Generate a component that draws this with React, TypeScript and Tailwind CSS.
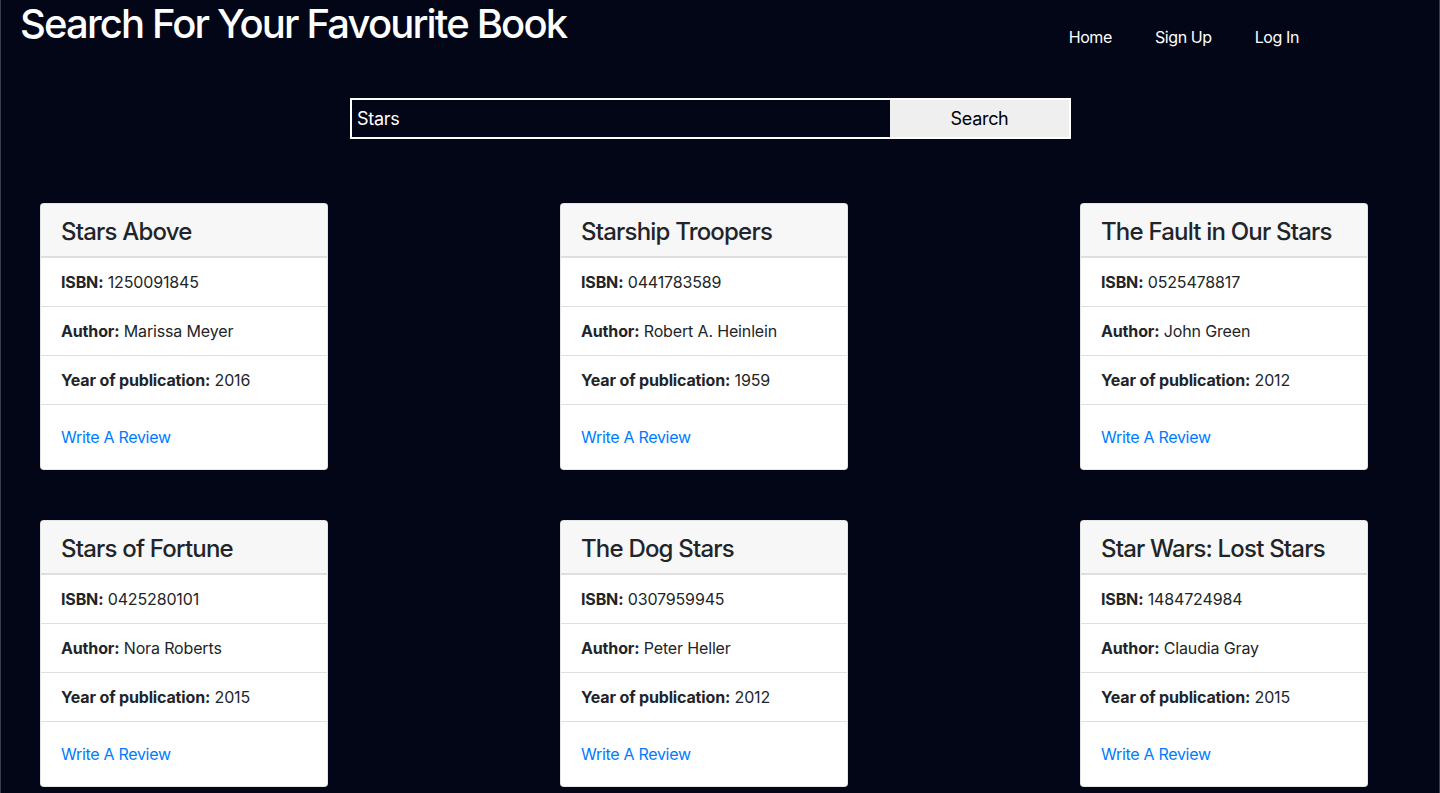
import React from 'react';

interface Book {
  title: string;
  isbn: string;
  author: string;
  year: string;
}

const books: Book[] = [
  { title: 'Stars Above', isbn: '1250091845', author: 'Marissa Meyer', year: '2016' },
  { title: 'Starship Troopers', isbn: '0441783589', author: 'Robert A. Heinlein', year: '1959' },
  { title: 'The Fault in Our Stars', isbn: '0525478817', author: 'John Green', year: '2012' },
  { title: 'Stars of Fortune', isbn: '0425280101', author: 'Nora Roberts', year: '2015' },
  { title: 'The Dog Stars', isbn: '0307959945', author: 'Peter Heller', year: '2012' },
  { title: 'Star Wars: Lost Stars', isbn: '1484724984', author: 'Claudia Gray', year: '2015' },
];

const BookCard: React.FC<{ book: Book }> = ({ book }) => {
  return (
    <div className="w-[288px] bg-white rounded-[4px] overflow-hidden text-[#212529] border border-black/10">
      {/* Header */}
      <div className="bg-[#f7f7f7] px-5 pt-[14px] pb-[10px] border-b-2 border-[#dedede]">
        <h3 className="text-[24px] leading-[28px] font-medium tracking-[-0.8px] whitespace-nowrap">{book.title}</h3>
      </div>
      <ul>
        <li className="px-5 py-3 text-[16px] leading-6 border-b border-[#dfdfdf]">
          <span className="font-bold">ISBN:</span> {book.isbn}
        </li>
        <li className="px-5 py-3 text-[16px] leading-6 border-b border-[#dfdfdf]">
          <span className="font-bold">Author:</span> {book.author}
        </li>
        <li className="px-5 py-3 text-[16px] leading-6 border-b border-[#dfdfdf]">
          <span className="font-bold">Year of publication:</span> {book.year}
        </li>
      </ul>
      <div className="px-5 py-5">
        <a href="#" className="text-[16px] leading-6 text-[#007bff] tracking-[-0.3px]">Write A Review</a>
      </div>
    </div>
  );
};

export default function App() {
  return (
    <div
      className="min-h-screen bg-[#020617] border-x border-b border-[#3a3d48] rounded-b-[6px] overflow-hidden tracking-[-0.15px]"
      style={{ fontFamily: 'Inter, "Liberation Sans", sans-serif' }}
    >
      {/* Top bar */}
      <div className="flex items-start justify-between">
        <h1 className="pl-[19px] text-[40px] leading-[48px] font-medium text-white tracking-[-1.85px]">
          Search For Your Favourite Book
        </h1>
        <nav className="flex items-center gap-[43px] pt-[25px] pr-[140px] text-white text-[16px] leading-6 tracking-[-0.4px]">
          <a href="#">Home</a>
          <a href="#">Sign Up</a>
          <a href="#">Log In</a>
        </nav>
      </div>

      {/* Search form */}
      <form className="mt-[49px] ml-[349px] flex w-[721px] h-[41px] border-2 border-white">
        <input
          type="text"
          defaultValue="Stars"
          className="flex-1 bg-[#020617] text-white text-[18px] px-[5px] outline-none tracking-[-0.3px]"
        />
        <button type="button" className="w-[179px] bg-[#efefef] text-black text-[18px] tracking-[-0.3px]">
          Search
        </button>
      </form>

      {/* Results */}
      <div className="mt-[64px] pl-[39px] grid grid-cols-[repeat(3,288px)] items-start gap-x-[232px] gap-y-[50px] pb-4">
        {books.map((b) => (
          <BookCard key={b.isbn} book={b} />
        ))}
      </div>
    </div>
  );
}
